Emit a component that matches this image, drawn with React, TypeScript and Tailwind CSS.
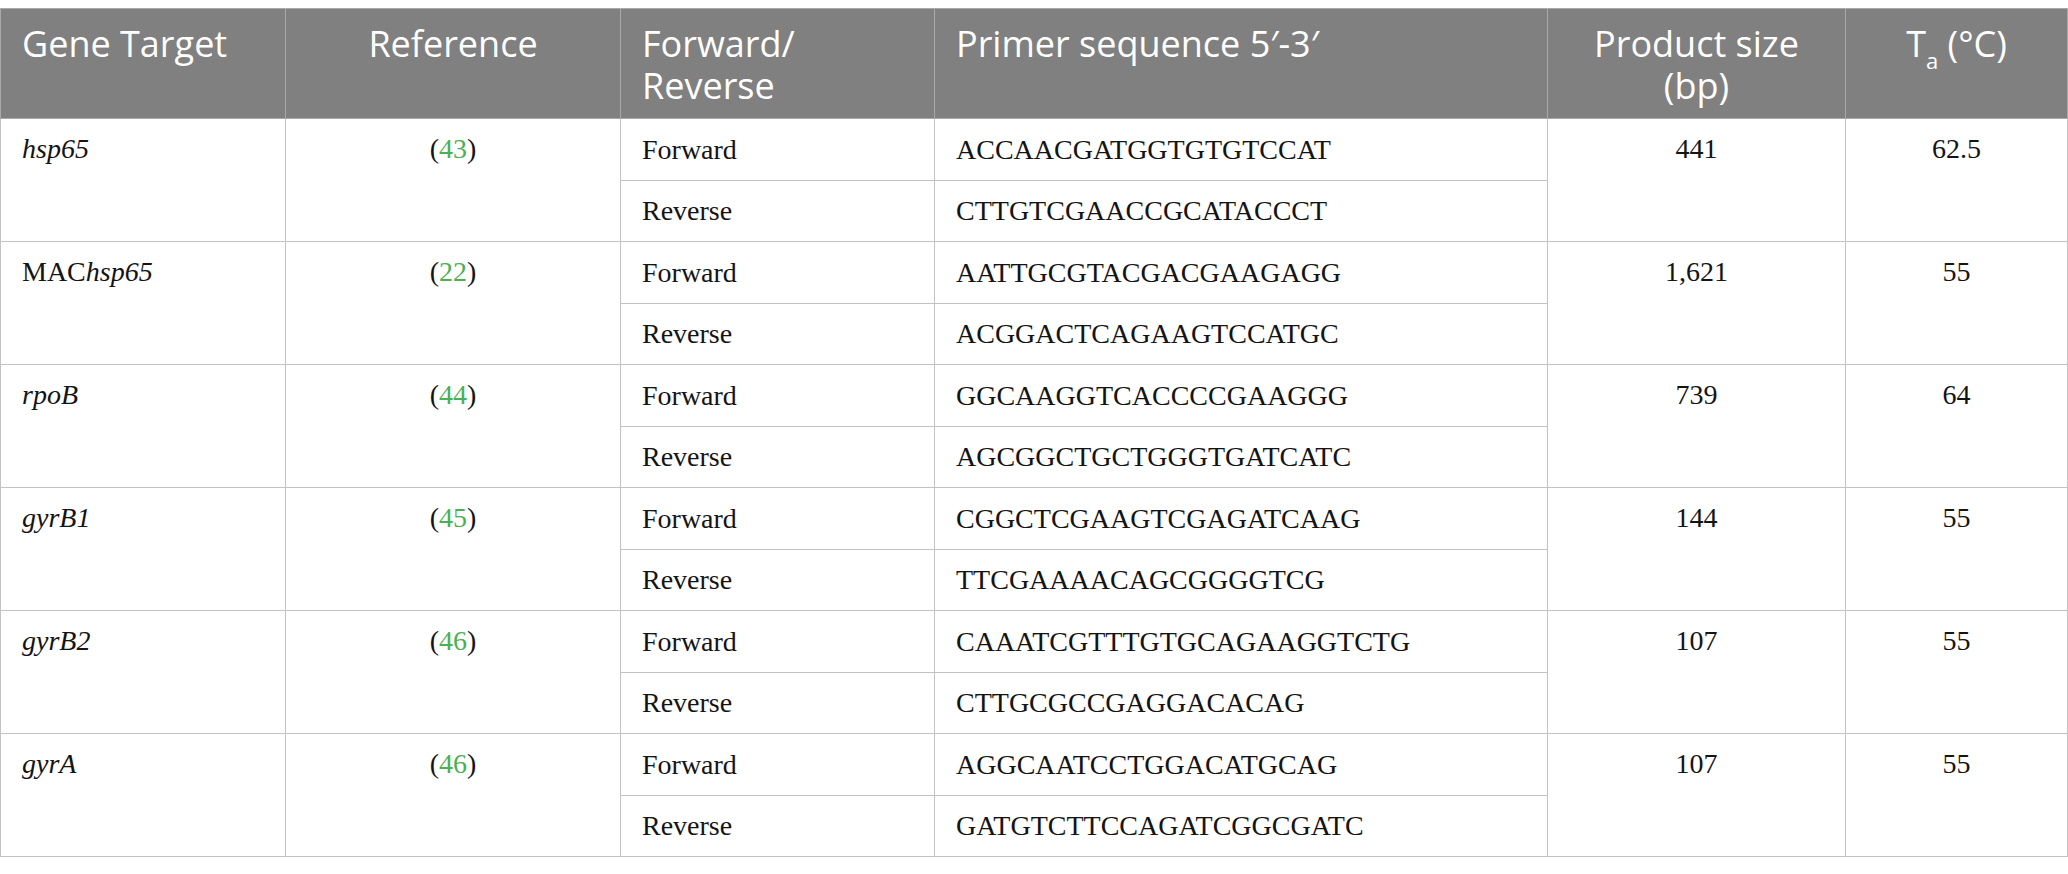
import React from "react";

type Row = {
  gene: React.ReactNode;
  ref: string;
  fwd: string;
  rev: string;
  size: string;
  ta: string;
};

const rows: Row[] = [
  { gene: <i>hsp65</i>, ref: "43", fwd: "ACCAACGATGGTGTGTCCAT", rev: "CTTGTCGAACCGCATACCCT", size: "441", ta: "62.5" },
  { gene: <>MAC<i>hsp65</i></>, ref: "22", fwd: "AATTGCGTACGACGAAGAGG", rev: "ACGGACTCAGAAGTCCATGC", size: "1,621", ta: "55" },
  { gene: <i>rpoB</i>, ref: "44", fwd: "GGCAAGGTCACCCCGAAGGG", rev: "AGCGGCTGCTGGGTGATCATC", size: "739", ta: "64" },
  { gene: <i>gyrB1</i>, ref: "45", fwd: "CGGCTCGAAGTCGAGATCAAG", rev: "TTCGAAAACAGCGGGGTCG", size: "144", ta: "55" },
  { gene: <i>gyrB2</i>, ref: "46", fwd: "CAAATCGTTTGTGCAGAAGGTCTG", rev: "CTTGCGCCGAGGACACAG", size: "107", ta: "55" },
  { gene: <i>gyrA</i>, ref: "46", fwd: "AGGCAATCCTGGACATGCAG", rev: "GATGTCTTCCAGATCGGCGATC", size: "107", ta: "55" },
];

const th = "border border-[#a9a9a9] align-top pt-[14px] font-normal leading-[42px]";
const td = "border border-[#c2c2c2] px-[21px] leading-[34px]";

export default function App() {
  return (
    <div className="w-[2068px] h-[874px] bg-white pt-[8px]">
      <table className="w-[2067px] table-fixed border-collapse font-['Liberation_Serif',serif] text-[28px] text-[#141414]">
        <colgroup>
          <col className="w-[285px]" />
          <col className="w-[335px]" />
          <col className="w-[314px]" />
          <col className="w-[613px]" />
          <col className="w-[298px]" />
          <col className="w-[222px]" />
        </colgroup>
        <thead>
          <tr className="h-[110px] bg-[#7f807f] text-white font-['Open_Sans',sans-serif] text-[36px]">
            <th className={`${th} text-left px-[21px]`}>Gene Target</th>
            <th className={`${th} text-center`}>Reference</th>
            <th className={`${th} text-left px-[21px]`}>
              Forward/
              <br />
              Reverse
            </th>
            <th className={`${th} text-left px-[21px]`}>Primer sequence 5′-3′</th>
            <th className={`${th} text-center`}>
              Product size
              <br />
              (bp)
            </th>
            <th className={`${th} text-center`}>
              T<sub className="text-[22px] align-[-6px]">a</sub> (°C)
            </th>
          </tr>
        </thead>
        <tbody>
          {rows.map((r, i) => (
            <React.Fragment key={i}>
              <tr className="h-[62px]">
                <td rowSpan={2} className={`${td} align-top pt-[13px]`}>
                  {r.gene}
                </td>
                <td rowSpan={2} className={`${td} align-top pt-[13px] text-center`}>
                  (<span className="text-[#4caf50]">{r.ref}</span>)
                </td>
                <td className={`${td} align-middle`}>Forward</td>
                <td className={`${td} align-middle`}>{r.fwd}</td>
                <td rowSpan={2} className={`${td} align-top pt-[13px] text-center`}>
                  {r.size}
                </td>
                <td rowSpan={2} className={`${td} align-top pt-[13px] text-center`}>
                  {r.ta}
                </td>
              </tr>
              <tr className="h-[61px]">
                <td className={`${td} align-middle`}>Reverse</td>
                <td className={`${td} align-middle`}>{r.rev}</td>
              </tr>
            </React.Fragment>
          ))}
        </tbody>
      </table>
    </div>
  );
}
